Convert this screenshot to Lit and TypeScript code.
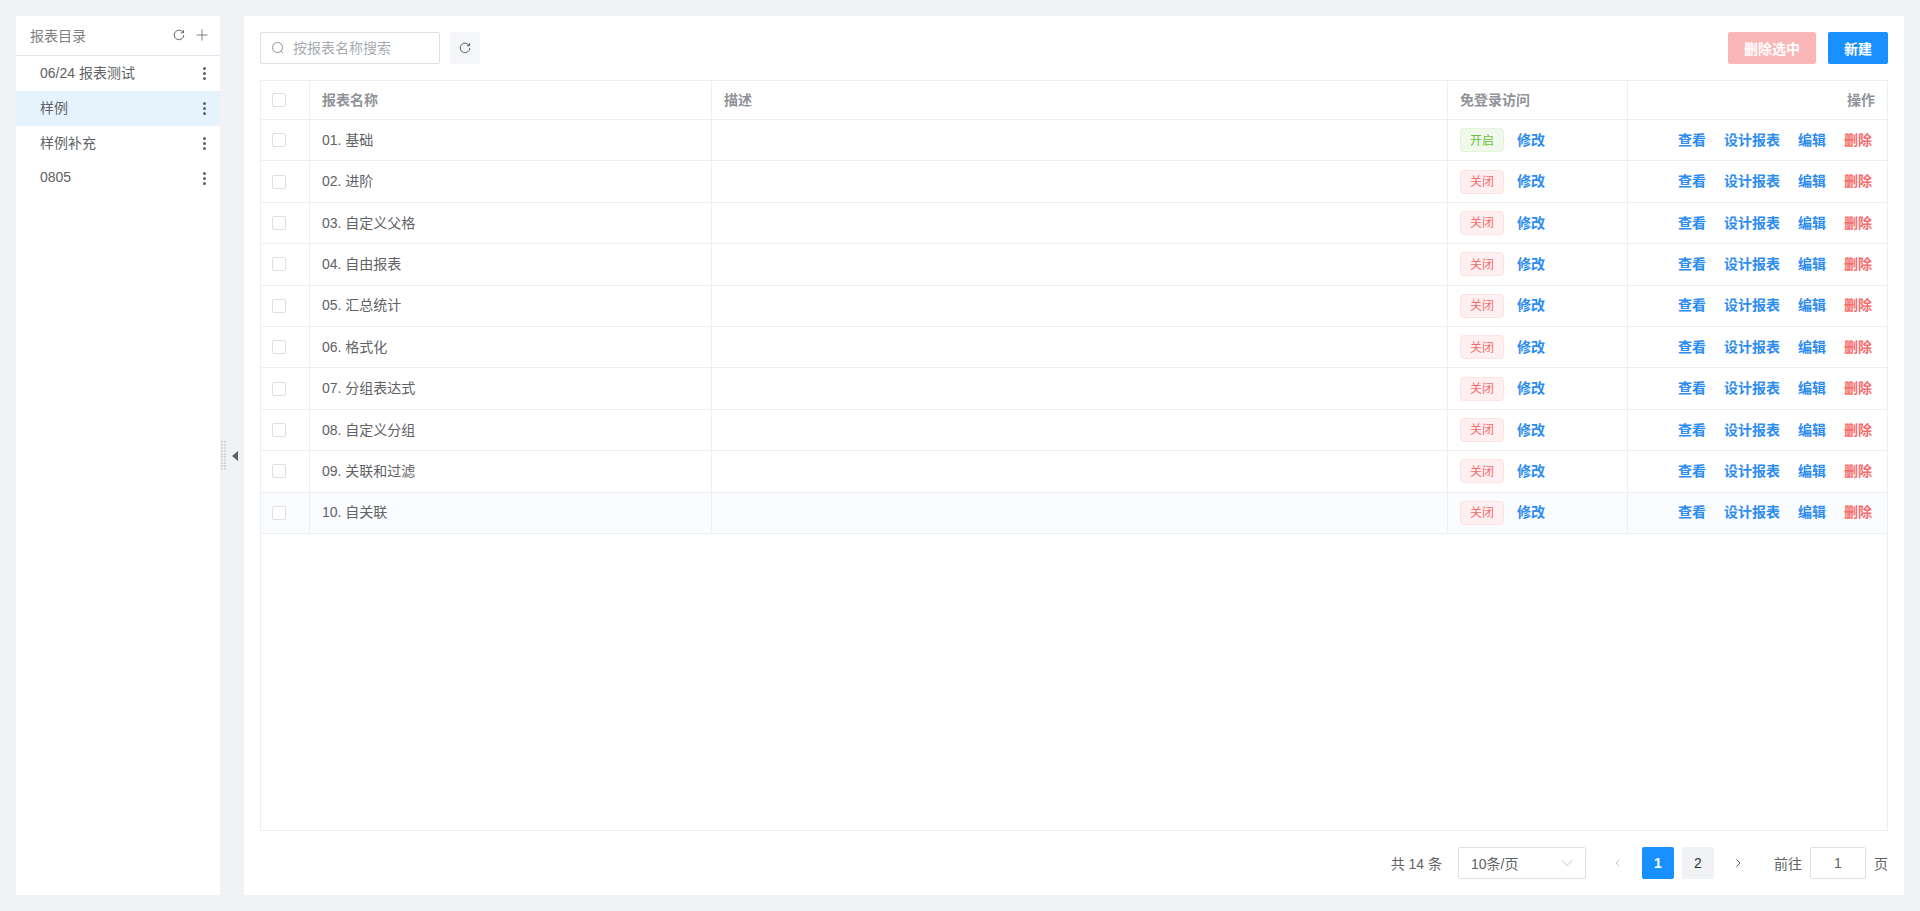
import { LitElement, html, css, svg } from 'lit';
import { customElement } from 'lit/decorators.js';
import { classMap } from 'lit/directives/class-map.js';

const refreshIcon = html`<svg class="ico" viewBox="0 0 12 12" width="12" height="12" fill="none" stroke="currentColor" stroke-width="1">
  <path d="M10.2 3.6A4.8 4.8 0 1 0 10.8 6"/>
  <path d="M10.5 1.2v2.6H7.9"/>
</svg>`;

const folders = ['06/24 报表测试', '样例', '样例补充', '0805'];

const reports = [
  '01. 基础', '02. 进阶', '03. 自定义父格', '04. 自由报表', '05. 汇总统计',
  '06. 格式化', '07. 分组表达式', '08. 自定义分组', '09. 关联和过滤', '10. 自关联',
];

@customElement('app-root')
export class AppRoot extends LitElement {
  static styles = css`
    :host {
      display: flex;
      height: 911px;
      box-sizing: border-box;
      padding: 16px;
      background: #f0f2f5;
      color: #606266;
      font-family: 'Liberation Sans', 'Noto Sans CJK SC', sans-serif;
      font-size: 14px;
    }
    * { box-sizing: border-box; }

    .side {
      width: 204px;
      flex: none;
      background: #fff;
    }
    .side-head {
      height: 40px;
      display: flex;
      align-items: center;
      padding: 0 12px 2px 14px;
      border-bottom: 1px solid #e4e7ed;
      color: #808080;
    }
    .side-head .title { flex: 1; }
    .side-head .ico { margin-right: 11px; color: #666; }
    .side-head .plus { margin-right: 0; color: #808080; }
    .folder {
      height: 35px;
      display: flex;
      align-items: center;
      justify-content: space-between;
      padding: 0 14px 2.6px 24px;
    }
    .folder.active { background: #e6f3fd; }
    .dots { display: flex; flex-direction: column; gap: 2px; margin-bottom: -2.6px; }
    .dots i { width: 3px; height: 3px; border-radius: 50%; background: #606266; }

    .splitter {
      width: 24px;
      flex: none;
      display: flex;
      align-items: center;
      gap: 6px;
    }
    .grip {
      width: 5px;
      height: 30px;
      margin-left: 1px;
      background-image: conic-gradient(at 2px 2px, transparent 75%, #d4d5d8 0);
      background-size: 3px 3px;
    }
    .arrow {
      width: 0;
      height: 0;
      border-style: solid;
      border-width: 5px 6px 5px 0;
      border-color: transparent #606266 transparent transparent;
    }

    .main {
      flex: 1;
      min-width: 0;
      display: flex;
      flex-direction: column;
      background: #fff;
      padding: 16px;
    }
    .toolbar {
      display: flex;
      align-items: center;
      height: 32px;
      margin-bottom: 16px;
    }
    .search {
      width: 180px;
      height: 32px;
      display: flex;
      align-items: center;
      gap: 8px;
      padding: 0 10px;
      border: 1px solid #dcdfe6;
      border-radius: 2px;
      color: #a8abb2;
    }
    .search span { margin-bottom: 2px; }
    .search svg { color: #909399; }
    .refresh {
      width: 30px;
      height: 32px;
      margin-left: 10px;
      display: flex;
      align-items: center;
      justify-content: center;
      background: #f5f6fa;
      border-radius: 2px;
      color: #606266;
    }
    .spacer { flex: 1; }
    .btn {
      height: 32px;
      display: flex;
      align-items: center;
      justify-content: center;
      border-radius: 2px;
      color: #fff;
      font-weight: 700;
    }
    .btn.danger { width: 88px; background: #fab6b6; margin-right: 12px; }
    .btn.primary { width: 60px; background: #1890ff; }

    .table {
      flex: 1;
      border: 1px solid #ebeef5;
    }
    .row {
      display: grid;
      grid-template-columns: 49px 402px 736px 180px 1fr;
      height: 41.4px;
      border-bottom: 1px solid #ebeef5;
    }
    .row.head { height: 39px; color: #909399; font-weight: 700; }
    .row.last { background: #fafcff; }
    .cell {
      display: flex;
      align-items: center;
      padding: 0 12px 2.6px;
      border-right: 1px solid #ebeef5;
      min-width: 0;
    }
    .cell:last-child { border-right: 0; justify-content: flex-end; }
    .cell.check { padding: 0 0 0 11px; }
    .box {
      width: 14px;
      height: 14px;
      border: 1px solid #dcdfe6;
      border-radius: 2px;
      background: #fff;
    }
    .tag {
      width: 44px;
      height: 24px;
      display: flex;
      align-items: center;
      justify-content: center;
      border-radius: 4px;
      font-size: 12px;
      margin-right: 13px;
      margin-bottom: -2.6px;
      padding-bottom: 2px;
      border: 1px solid;
    }
    .tag.on { background: #f0f9eb; border-color: #e1f3d8; color: #67c23a; }
    .tag.off { background: #fef0f0; border-color: #fde2e2; color: #f56c6c; }
    .link { color: #2d8cf0; font-weight: 700; white-space: nowrap; }
    .ops { padding-right: 15px; gap: 18px; }
    .link.del { color: #f56c6c; }

    .pager {
      height: 32px;
      margin-top: 16px;
      display: flex;
      align-items: center;
      justify-content: flex-end;
    }
    .select {
      width: 128px;
      height: 32px;
      margin-left: 16px;
      display: flex;
      align-items: center;
      justify-content: space-between;
      padding: 0 12px;
      border: 1px solid #dcdfe6;
      border-radius: 2px;
    }
    .nav {
      width: 32px;
      height: 32px;
      margin-left: 8px;
      display: flex;
      align-items: center;
      justify-content: center;
      color: #606266;
    }
    .nav.off { color: #c0c4cc; margin-left: 16px; }
    .page {
      width: 32px;
      height: 32px;
      margin-left: 8px;
      display: flex;
      align-items: center;
      justify-content: center;
      background: #f0f2f5;
      border-radius: 2px;
      color: #303133;
    }
    .page.current { background: #1890ff; color: #fff; font-weight: 700; }
    .goto { margin-left: 20px; }
    .jump {
      width: 56px;
      height: 32px;
      margin: 0 8px;
      display: flex;
      align-items: center;
      justify-content: center;
      border: 1px solid #dcdfe6;
      border-radius: 2px;
    }
  `;

  private _chevron(d: string) {
    return html`<svg viewBox="0 0 12 12" width="12" height="12" fill="none" stroke="currentColor" stroke-width="1">${svg`<path d=${d}/>`}</svg>`;
  }

  private _row(name: string, i: number) {
    const open = i === 0;
    return html`
      <div class=${classMap({ row: true, last: i === reports.length - 1 })}>
        <div class="cell check"><span class="box"></span></div>
        <div class="cell">${name}</div>
        <div class="cell"></div>
        <div class="cell">
          <span class="tag ${open ? 'on' : 'off'}">${open ? '开启' : '关闭'}</span>
          <span class="link">修改</span>
        </div>
        <div class="cell ops">
          <span class="link">查看</span>
          <span class="link">设计报表</span>
          <span class="link">编辑</span>
          <span class="link del">删除</span>
        </div>
      </div>
    `;
  }

  render() {
    return html`
      <aside class="side">
        <div class="side-head">
          <span class="title">报表目录</span>
          ${refreshIcon}
          <svg class="ico plus" viewBox="0 0 12 12" width="12" height="12" fill="none" stroke="currentColor" stroke-width="1"><path d="M6 .5v11M.5 6h11"/></svg>
        </div>
        ${folders.map((f, i) => html`
          <div class=${classMap({ folder: true, active: i === 1 })}>
            <span>${f}</span>
            <span class="dots"><i></i><i></i><i></i></span>
          </div>
        `)}
      </aside>
      <div class="splitter"><span class="grip"></span><span class="arrow"></span></div>
      <main class="main">
        <div class="toolbar">
          <div class="search">
            <svg viewBox="0 0 14 14" width="14" height="14" fill="none" stroke="currentColor" stroke-width="1"><circle cx="6.5" cy="6.5" r="5"/><path d="M10.2 10.2l1.8 1.8"/></svg>
            <span>按报表名称搜索</span>
          </div>
          <div class="refresh">${refreshIcon}</div>
          <div class="spacer"></div>
          <div class="btn danger">删除选中</div>
          <div class="btn primary">新建</div>
        </div>
        <div class="table">
          <div class="row head">
            <div class="cell check"><span class="box"></span></div>
            <div class="cell">报表名称</div>
            <div class="cell">描述</div>
            <div class="cell">免登录访问</div>
            <div class="cell">操作</div>
          </div>
          ${reports.map((r, i) => this._row(r, i))}
        </div>
        <div class="pager">
          <span>共 14 条</span>
          <div class="select">
            <span>10条/页</span>
            <svg viewBox="0 0 12 12" width="12" height="12" fill="none" stroke="#c0c4cc" stroke-width="1"><path d="M1 3.5l5 5 5-5"/></svg>
          </div>
          <span class="nav off">${this._chevron('M7.5 2.5L4 6l3.5 3.5')}</span>
          <span class="page current">1</span>
          <span class="page">2</span>
          <span class="nav">${this._chevron('M4.5 2.5L8 6l-3.5 3.5')}</span>
          <span class="goto">前往</span>
          <span class="jump">1</span>
          <span>页</span>
        </div>
      </main>
    `;
  }
}
